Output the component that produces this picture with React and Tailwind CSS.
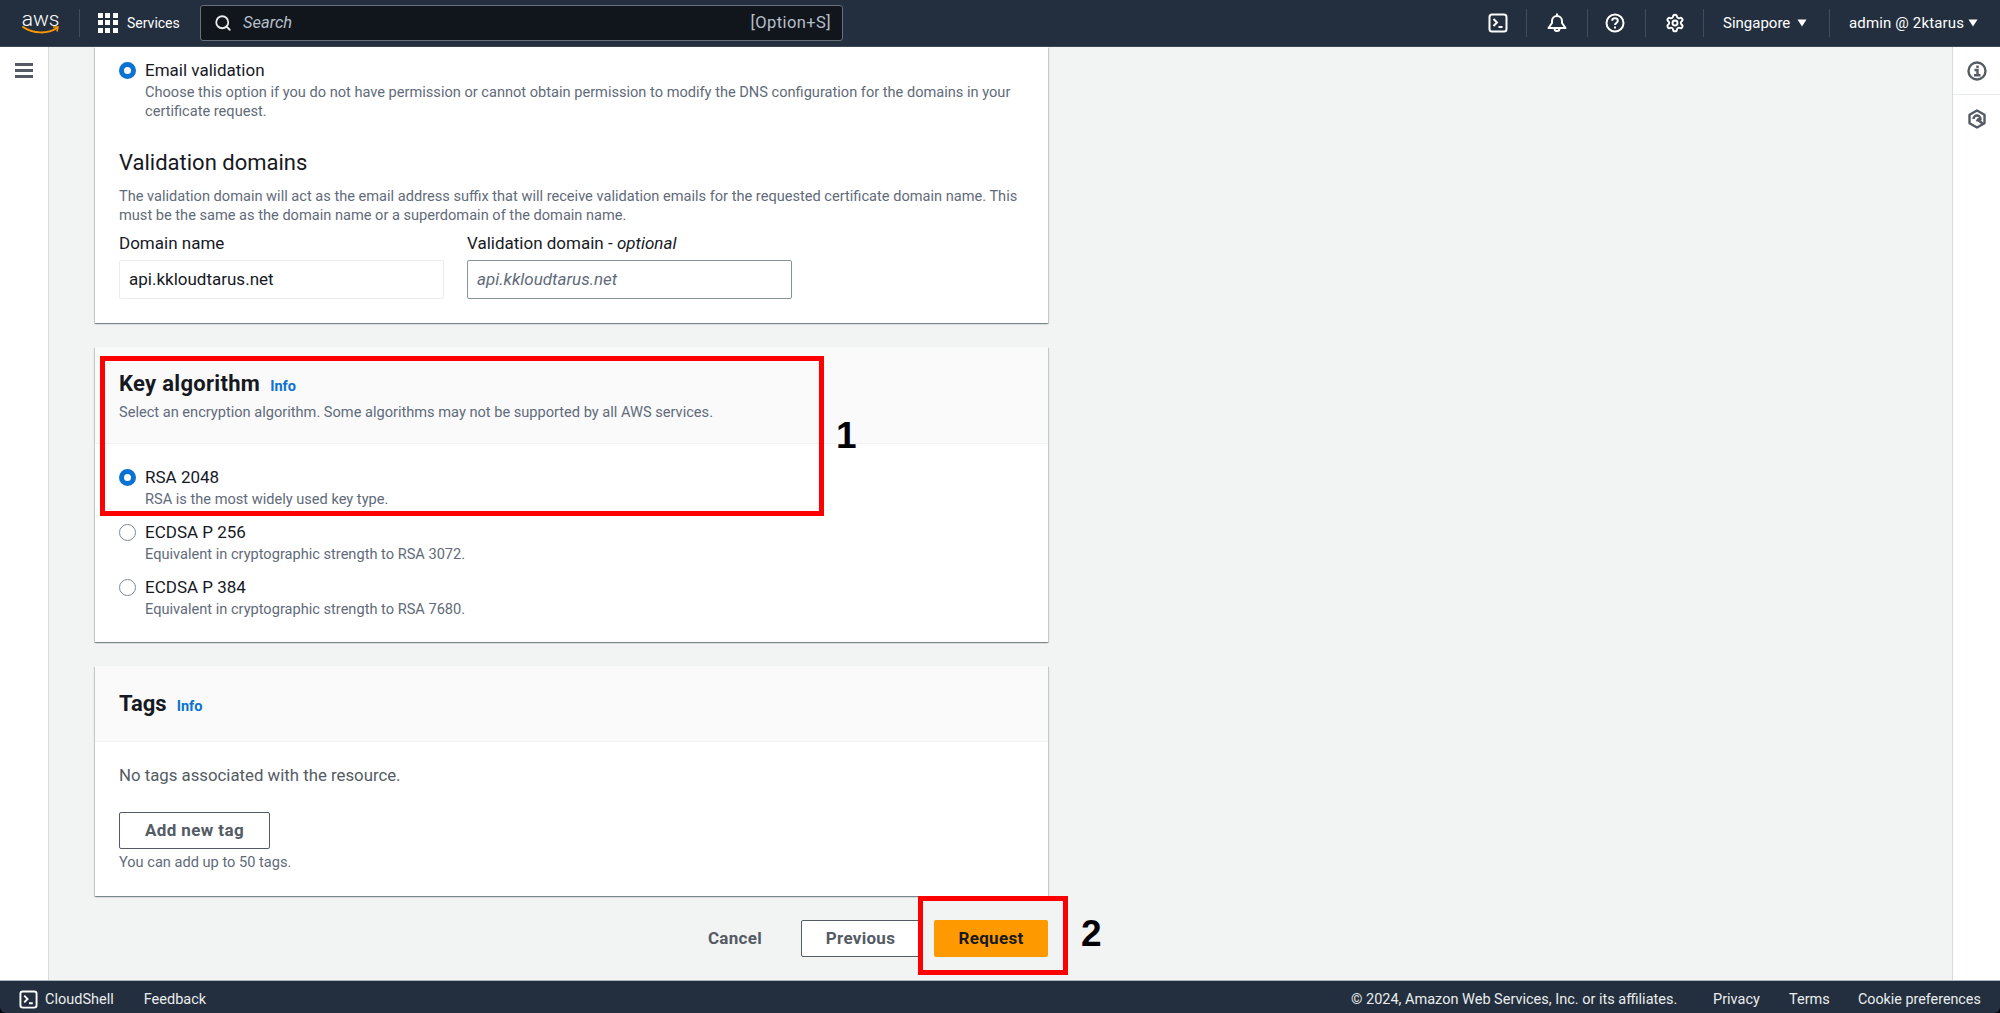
import { Search, Settings } from "lucide-react";

const ConsoleIcon = ({ className }) => (
  <svg viewBox="0 0 20 20" fill="none" stroke="currentColor" strokeWidth="2" className={className}>
    <rect x="1.5" y="1.5" width="17" height="17" rx="2.5" />
    <path d="M5.5 6l3.5 3.5-3.5 3.5M10.5 14h4" />
  </svg>
);

const Caret = () => (
  <svg viewBox="0 0 10 8" className="w-[10px] h-[8px] fill-current">
    <path d="M0.5 0.5h9L5 7.500z" />
  </svg>
);

const Divider = ({ className = "" }) => <div className={`w-px h-7 bg-[#414d5c] shrink-0 ${className}`} />;

const TopNav = () => (
  <header className="h-[47px] shrink-0 bg-[#232f3e] border-b border-[#3b4654] flex items-center text-white text-[15px]">
    <div className="w-[79px] shrink-0 flex flex-col items-center pl-[2px]">
      <span className="text-[21px] leading-[16px] font-light">aws</span>
      <svg viewBox="0 0 38 9" className="w-[38px] h-[9px] -mt-[1px]" fill="none">
        <path d="M1 1c10 7 25 7 34 1" stroke="#ff9900" strokeWidth="2" strokeLinecap="round" />
        <path d="M31 1h5l-1 4.5" stroke="#ff9900" strokeWidth="1.5" />
      </svg>
    </div>
    <Divider />
    <div className="grid grid-cols-3 gap-[2px] ml-[18px] w-[20px] h-[20px] shrink-0">
      {Array.from({ length: 9 }).map((_, i) => (
        <span key={i} className="bg-white w-[5px] h-[5px]" />
      ))}
    </div>
    <span className="ml-[9px] w-[73px] text-[14px]">Services</span>
    <div className="w-[643px] h-[36px] bg-[#11161d] border border-[#687078] rounded-[3px] flex items-center pl-[13px] pr-[11px] shrink-0">
      <Search size={18} strokeWidth={2.4} className="text-[#e9ebed]" />
      <span className="ml-[11px] italic text-[#b6bec9] text-[16.5px]">Search</span>
      <span className="ml-auto text-[#b6bec9] text-[16.5px] tracking-[0.4px]">[Option+S]</span>
    </div>
    <div className="ml-auto flex items-center h-full">
      <ConsoleIcon className="w-5 h-5" />
      <Divider className="ml-[18px]" />
      <svg viewBox="0 0 20 20" fill="none" stroke="currentColor" strokeWidth="2" className="w-5 h-5 ml-[20px]">
        <path d="M1.500 15h17l-3.500-5V8A5 5 0 0 0 5 8v2z" strokeLinejoin="round" />
        <path d="M10 .5V3M7.500 15.500a2.500 2.500 0 0 0 5 0" />
      </svg>
      <Divider className="ml-[20px]" />
      <svg viewBox="0 0 20 20" fill="none" stroke="currentColor" strokeWidth="2" className="w-5 h-5 ml-[17px]">
        <circle cx="10" cy="10" r="8.500" />
        <path d="M7.200 7.800C7.200 4.500 12.800 4.500 12.800 7.800c0 2.200-2.800 2.200-2.800 4.200M10 13.500v2" />
      </svg>
      <Divider className="ml-[20px]" />
      <Settings size={20} strokeWidth={2.3} className="ml-[19px]" />
      <Divider className="ml-[18px]" />
      <span className="ml-[19px] w-[66px] whitespace-nowrap">Singapore</span>
      <span className="ml-[8px]"><Caret /></span>
      <Divider className="ml-[22px]" />
      <span className="ml-[19px] w-[111px] whitespace-nowrap tracking-[0.15px]">admin @ 2ktarus</span>
      <span className="ml-[8px] mr-[22px]"><Caret /></span>
    </div>
  </header>
);

const Radio = ({ checked }) =>
  checked ? (
    <span className="block w-[17px] h-[17px] rounded-full border-[5px] border-[#0972d3] bg-white" />
  ) : (
    <span className="block w-[17px] h-[17px] rounded-full border border-[#7d8998] bg-white" />
  );

const RadioOption = ({ checked, label, desc, className = "" }) => (
  <div className={`flex ${className}`}>
    <div className="pt-[3px] w-[26px] shrink-0">
      <Radio checked={checked} />
    </div>
    <div>
      <div className="text-[17px] leading-[22px] text-[#16191f]">{label}</div>
      <div className="text-[14.6px] leading-[19px] text-[#5f6b7a] mt-[2px]">{desc}</div>
    </div>
  </div>
);

const Card = ({ className = "", children }) => (
  <section className={`bg-white shadow-[0_1px_1px_0_rgba(0,28,36,0.3),1px_1px_1px_0_rgba(0,28,36,0.15),-1px_1px_1px_0_rgba(0,28,36,0.15)] ${className}`}>
    {children}
  </section>
);

const Info = ({ className = "" }) => (
  <span className={`text-[#0972d3] text-[14.5px] font-bold ${className}`}>Info</span>
);

const ValidationCard = () => (
  <Card className="h-[276px] px-[24px] pt-[12px]">
    <RadioOption
      checked
      label="Email validation"
      desc={
        <>
          Choose this option if you do not have permission or cannot obtain permission to modify the DNS configuration for the domains in your
          <br />
          certificate request.
        </>
      }
    />
    <h3 className="mt-[29px] text-[22px] leading-[26px] text-[#16191f]">Validation domains</h3>
    <p className="mt-[11px] text-[14.6px] leading-[19px] text-[#5f6b7a]">
      The validation domain will act as the email address suffix that will receive validation emails for the requested certificate domain name. This
      <br />
      must be the same as the domain name or a superdomain of the domain name.
    </p>
    <div className="flex gap-[23px] mt-[7px]">
      <div className="w-[325px]">
        <div className="text-[17px] leading-[22px] text-[#16191f]">Domain name</div>
        <div className="mt-[6px] h-[39px] border border-[#eaeded] rounded-[2px] flex items-center px-[9px] text-[17px] text-[#16191f]">api.kkloudtarus.net</div>
      </div>
      <div className="w-[325px]">
        <div className="text-[17px] leading-[22px] text-[#16191f]">
          Validation domain - <i>optional</i>
        </div>
        <div className="mt-[6px] h-[39px] border border-[#879596] rounded-[2px] flex items-center px-[9px] text-[17px] italic text-[#5f6b7a]">api.kkloudtarus.net</div>
      </div>
    </div>
  </Card>
);

const KeyAlgorithmCard = () => (
  <Card className="mt-[24px] h-[295px]">
    <div className="h-[97px] bg-[#fafafa] border-b border-[#f2f3f3] px-[24px] pt-[24px]">
      <div className="flex items-baseline">
        <h2 className="text-[22px] leading-[26px] font-bold text-[#16191f] tracking-[0.3px]">Key algorithm</h2>
        <Info className="ml-[10px]" />
      </div>
      <p className="mt-[5px] text-[14.6px] leading-[18px] text-[#5f6b7a]">
        Select an encryption algorithm. Some algorithms may not be supported by all AWS services.
      </p>
    </div>
    <div className="px-[24px] pt-[22px]">
      <RadioOption checked label="RSA 2048" desc="RSA is the most widely used key type." />
      <RadioOption className="mt-[12px]" label="ECDSA P 256" desc="Equivalent in cryptographic strength to RSA 3072." />
      <RadioOption className="mt-[12px]" label="ECDSA P 384" desc="Equivalent in cryptographic strength to RSA 7680." />
    </div>
  </Card>
);

const TagsCard = () => (
  <Card className="mt-[24px] h-[230px]">
    <div className="h-[76px] bg-[#fafafa] border-b border-[#f2f3f3] px-[24px] pt-[25px]">
      <div className="flex items-baseline">
        <h2 className="text-[22px] leading-[26px] font-bold text-[#16191f]">Tags</h2>
        <Info className="ml-[10px]" />
      </div>
    </div>
    <div className="px-[24px] pt-[22px]">
      <p className="text-[16.8px] leading-[22px] text-[#545b64]">No tags associated with the resource.</p>
      <button className="block mt-[26px] w-[151px] h-[37px] border border-[#545b64] rounded-[2px] bg-white text-[17px] font-bold tracking-[0.4px] text-[#545b64]">Add new tag</button>
      <p className="mt-[4px] text-[14.6px] leading-[18px] text-[#5f6b7a]">You can add up to 50 tags.</p>
    </div>
  </Card>
);

const Actions = () => (
  <div className="flex items-center justify-end mt-[24px] h-[37px]">
    <span className="text-[17px] font-bold tracking-[0.3px] text-[#545b64]">Cancel</span>
    <button className="ml-[39px] w-[119px] h-[37px] border border-[#545b64] rounded-[2px] bg-white text-[17px] font-bold tracking-[0.3px] text-[#545b64]">Previous</button>
    <button className="ml-[14px] w-[114px] h-[37px] rounded-[2px] bg-[#ff9900] text-[17px] font-bold tracking-[0.3px] text-[#16191f]">Request</button>
  </div>
);

const Footer = () => (
  <div className="h-[33px] shrink-0 bg-black">
    <footer className="h-full bg-[#232f3e] rounded-b-[6px] flex items-center pt-[5px] text-[14.5px] text-[#eaeded] border-t border-[#aab7b8] whitespace-nowrap">
      <ConsoleIcon className="ml-[19px] w-[19px] h-[19px] text-white" />
      <span className="ml-[7px]">CloudShell</span>
      <span className="ml-[30px]">Feedback</span>
      <span className="ml-auto w-[326px]">© 2024, Amazon Web Services, Inc. or its affiliates.</span>
      <span className="ml-[36px] w-[46px]">Privacy</span>
      <span className="ml-[30px] w-[39px]">Terms</span>
      <span className="ml-[30px] mr-[19px] w-[123px] text-[14.3px]">Cookie preferences</span>
    </footer>
  </div>
);

export default function App() {
  return (
    <div className="relative h-screen overflow-hidden flex flex-col bg-[#f2f3f3] font-['Roboto',sans-serif]">
      <TopNav />
      <div className="flex-1 min-h-0 flex">
        <aside className="w-[49px] shrink-0 bg-white border-r border-[#d5dbdb] pt-[16px] flex flex-col items-center gap-[3px]">
          <span className="w-[18px] h-[3px] bg-[#545b64]" />
          <span className="w-[18px] h-[3px] bg-[#545b64]" />
          <span className="w-[18px] h-[3px] bg-[#545b64]" />
        </aside>
        <main className="w-[953px] ml-[46px] shrink-0">
          <ValidationCard />
          <KeyAlgorithmCard />
          <TagsCard />
          <Actions />
        </main>
        <aside className="ml-auto w-[48px] shrink-0 bg-white border-l border-[#d5dbdb] flex flex-col items-center text-[#545b64]">
          <div className="h-[48px] w-full flex items-center justify-center border-b border-[#eaeded]">
            <svg viewBox="0 0 20 20" fill="none" stroke="currentColor" strokeWidth="2.400" className="w-5 h-5">
              <circle cx="10" cy="10" r="8.500" />
              <path d="M7.500 9h3v5M7 14.300h6.500M10.500 4.500v2.500" />
            </svg>
          </div>
          <div className="h-[48px] flex items-center justify-center">
            <svg viewBox="0 0 20 20" fill="none" stroke="currentColor" strokeWidth="2.400" className="w-5 h-5">
              <path d="M10 1.500l7.500 4.200v8.600L10 18.500l-7.500-4.200V5.700z" strokeLinejoin="round" />
              <path d="M6.500 10a3.500 3.500 0 0 1 7 0c-2 0-3 .6-3.500 2.500M10 10l5.500 4.500" />
            </svg>
          </div>
        </aside>
      </div>
      <Footer />

      {/* annotation overlays */}
      <div className="absolute left-[100px] top-[356px] w-[724px] h-[160px] border-[5px] border-[#ff0000]" />
      <div className="absolute left-[918px] top-[896px] w-[150px] h-[79px] border-[5px] border-[#ff0000]" />
      <span className="absolute left-[836px] top-[414px] text-[37px] leading-[44px] font-bold text-black font-['Liberation_Sans',sans-serif]">1</span>
      <span className="absolute left-[1081px] top-[912px] text-[37px] leading-[44px] font-bold text-black font-['Liberation_Sans',sans-serif]">2</span>
    </div>
  );
}
